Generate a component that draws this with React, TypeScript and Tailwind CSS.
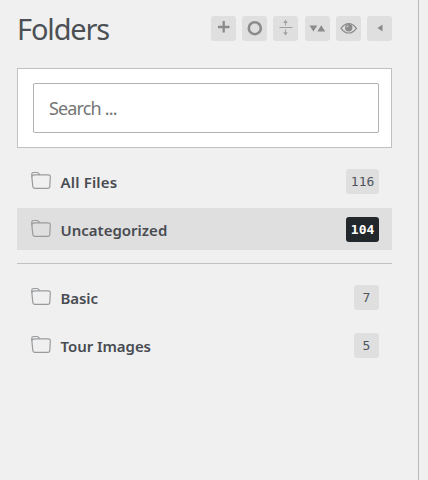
import React, { useState } from "react";
import clsx from "clsx";

type Folder = {
  name: string;
  count: number;
  tracking: string;
};

const defaultFolders: Folder[] = [
  { name: "All Files", count: 116, tracking: "tracking-[0.17px]" },
  { name: "Uncategorized", count: 104, tracking: "tracking-normal" },
];

const userFolders: Folder[] = [
  { name: "Basic", count: 7, tracking: "tracking-[-0.1px]" },
  { name: "Tour Images", count: 5, tracking: "tracking-[-0.05px]" },
];

const FolderIcon = () => (
  <svg
    width="21"
    height="19"
    viewBox="0 0 21 19"
    fill="none"
    stroke="#999b9d"
    strokeWidth="1.2"
    strokeLinejoin="round"
    className="shrink-0"
  >
    <path d="M0.8 6V3.2Q0.8 1.5 2.6 1.5H5.8Q7 1.5 7.7 2.5L8.6 3.6" />
    <path d="M1.2 4.8Q1.9 3.9 3.4 3.9H17.4Q19.4 3.9 19.3 6L18.8 15.2Q18.7 17.3 16.9 17.3H3.6Q2 17.3 1.8 15.4L0.9 6.4Q0.8 5.4 1.2 4.8Z" />
  </svg>
);

const actions = [
  {
    label: "New folder",
    icon: <path d="M7 11H18.5M12.7 5V16.5" stroke="#8b8b8b" strokeWidth="2.3" />,
  },
  {
    label: "Refresh",
    icon: <circle cx="12.8" cy="12.2" r="6" stroke="#8b8b8b" strokeWidth="2.6" />,
  },
  {
    label: "Resize",
    icon: (
      <>
        <path d="M6.5 11.5H19.5M12.5 5V9.5M12.5 13.5V18.5" stroke="#a0a0a0" />
        <path d="M10.2 7L12.5 3.8L14.8 7ZM10.2 16.3L12.5 19.4L14.8 16.3Z" fill="#a0a0a0" />
      </>
    ),
  },
  {
    label: "Sort",
    icon: <path d="M4.5 9.5H12.3L8.4 15.5ZM12.3 15.5H20.2L16.2 9.2Z" fill="#8b8b8b" />,
  },
  {
    label: "Visibility",
    icon: (
      <>
        <path
          d="M5 12.3Q8.5 7.6 12.7 7.6T20.4 12.3Q16.9 17 12.7 17T5 12.3Z"
          stroke="#8b8b8b"
          strokeWidth="1.2"
        />
        <circle cx="12.7" cy="11.8" r="3.7" fill="#8b8b8b" />
        <path d="M10.8 11.5Q10.9 9.8 12.6 9.7" stroke="#dfdfdf" strokeWidth="1.1" />
      </>
    ),
  },
  {
    label: "Collapse",
    icon: <path d="M15.5 8.6V15.4L10.5 12Z" fill="#8b8b8b" />,
  },
];

const FolderRow = ({
  folder,
  active,
  onSelect,
}: {
  folder: Folder;
  active: boolean;
  onSelect: () => void;
}) => (
  <div
    className={clsx(
      "flex h-[42px] cursor-pointer items-center pr-[13px] pl-[13.5px]",
      active && "bg-[#dfdfdf]"
    )}
    onClick={onSelect}
  >
    <div className="pb-0.5">
      <FolderIcon />
    </div>
    <span
      className={clsx(
        "ml-[9px] flex-1 pt-0.5 font-['Noto_Sans',sans-serif] text-[15px] leading-5 font-semibold text-[#484b51]",
        folder.tracking
      )}
    >
      {folder.name}
    </span>
    <span
      className={clsx(
        "flex h-[25px] min-w-[25px] items-center justify-center rounded-[3px] px-[4.7px] pt-px font-['DejaVu_Sans_Mono',monospace] text-[13px]",
        active ? "bg-[#22272b] font-bold text-white" : "bg-[#dfdfdf] text-[#50555c]"
      )}
    >
      {folder.count}
    </span>
  </div>
);

const App = () => {
  const [selected, setSelected] = useState("Uncategorized");

  const renderRow = (folder: Folder) => (
    <FolderRow
      key={folder.name}
      folder={folder}
      active={selected === folder.name}
      onSelect={() => setSelected(folder.name)}
    />
  );

  return (
    <div className="h-screen w-full overflow-hidden bg-[#f0f0f0]">
      <aside className="h-full w-[419px] border-r border-[#b9babc] bg-[#f0f0f0] pr-[26px] pl-[17px]">
        <header className="flex h-[68px] items-start justify-between">
          <h1 className="pt-[9px] font-['Noto_Sans',sans-serif] text-[29px] leading-10 font-normal tracking-[-1.15px] text-[#4c5055]">
            Folders
          </h1>
          <div className="flex gap-[6.2px] pt-4">
            {actions.map((action) => (
              <button
                key={action.label}
                aria-label={action.label}
                className="size-[25px] cursor-pointer rounded-[3px] bg-[#dfdfdf]"
              >
                <svg width="25" height="25" viewBox="0 0 25 25" fill="none">
                  {action.icon}
                </svg>
              </button>
            ))}
          </div>
        </header>
        <div className="h-20 border border-[#c0c1c3] bg-white pt-[14px] pr-3 pl-[15px]">
          <input
            type="text"
            placeholder="Search ..."
            className="h-[50px] w-full rounded-[2px] border border-[#b0b1b3] bg-white px-[15px] font-['Noto_Sans',sans-serif] text-[18px] font-normal tracking-[-0.85px] outline-none placeholder:text-[#757575]"
          />
        </div>
        <div className="flex flex-col gap-1.5 pt-3">{defaultFolders.map(renderRow)}</div>
        <hr className="mt-[13px] border-[#c0c1c3]" />
        <div className="flex flex-col gap-1.5 pt-3">{userFolders.map(renderRow)}</div>
      </aside>
    </div>
  );
};

export default App;
